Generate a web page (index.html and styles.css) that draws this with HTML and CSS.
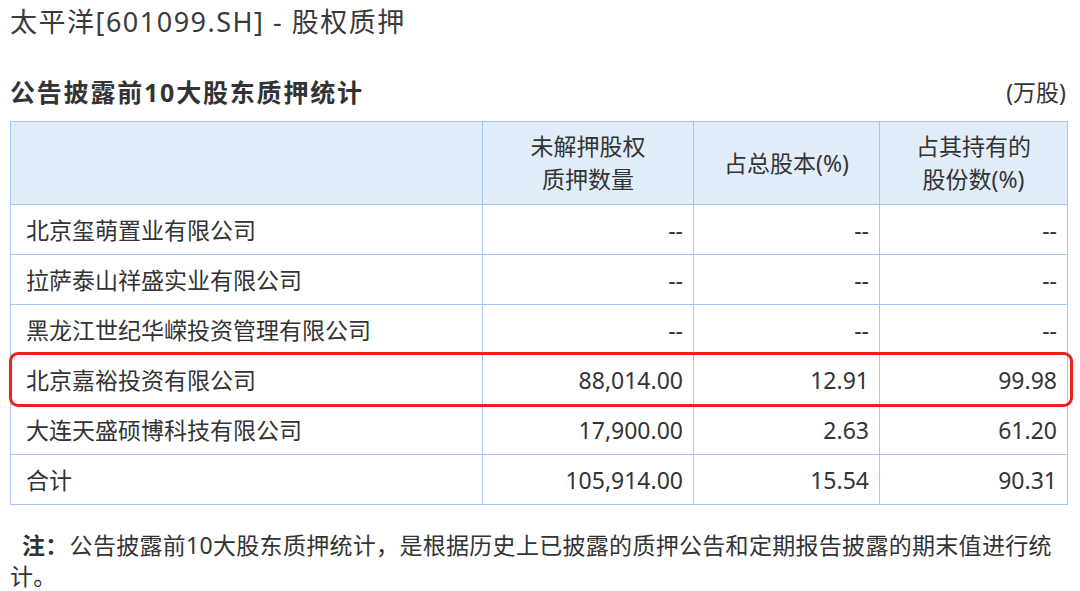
FILE: index.html
```html
<!DOCTYPE html>
<html lang="zh-CN">
<head>
<meta charset="utf-8">
<title>太平洋[601099.SH] - 股权质押</title>
<link rel="stylesheet" href="styles.css">
</head>
<body>
<div class="page">
  <h1 class="title">太平洋[601099.SH] - 股权质押</h1>
  <div class="subhead">
    <h2 class="subtitle">公告披露前10大股东质押统计</h2>
    <span class="unit">(万股)</span>
  </div>
  <div class="table-wrap">
    <table class="pledge">
      <colgroup>
        <col class="c-name">
        <col class="c-qty">
        <col class="c-pct1">
        <col class="c-pct2">
      </colgroup>
      <thead>
        <tr>
          <th></th>
          <th>未解押股权<br>质押数量</th>
          <th>占总股本(%)</th>
          <th>占其持有的<br>股份数(%)</th>
        </tr>
      </thead>
      <tbody>
        <tr><td class="name">北京玺萌置业有限公司</td><td>--</td><td>--</td><td>--</td></tr>
        <tr><td class="name">拉萨泰山祥盛实业有限公司</td><td>--</td><td>--</td><td>--</td></tr>
        <tr><td class="name">黑龙江世纪华嵘投资管理有限公司</td><td>--</td><td>--</td><td>--</td></tr>
        <tr><td class="name">北京嘉裕投资有限公司</td><td>88,014.00</td><td>12.91</td><td>99.98</td></tr>
        <tr><td class="name">大连天盛硕博科技有限公司</td><td>17,900.00</td><td>2.63</td><td>61.20</td></tr>
        <tr><td class="name">合计</td><td>105,914.00</td><td>15.54</td><td>90.31</td></tr>
      </tbody>
    </table>
    <div class="highlight"></div>
  </div>
  <p class="note"><b class="note-label">注：</b>公告披露前10大股东质押统计，是根据历史上已披露的质押公告和定期报告披露的期末值进行统计。</p>
</div>
</body>
</html>
```

FILE: styles.css
```css
html, body {
  margin: 0;
  padding: 0;
  background: #ffffff;
}

body {
  font-family: "Noto Sans", "Noto Sans CJK SC", sans-serif;
  color: #333333;
}

.page {
  padding: 4px 13px 0 10px;
}

.title {
  margin: 0;
  font-size: 27px;
  font-weight: normal;
  line-height: 35px;
  color: #3a3a3a;
  letter-spacing: 1.5px;
}

.subhead {
  display: flex;
  justify-content: space-between;
  align-items: center;
  margin-top: 37px;
  height: 32px;
}

.subtitle {
  margin: 0;
  font-size: 25px;
  font-weight: bold;
  line-height: 32px;
  letter-spacing: 1.8px;
  color: #333333;
}

.unit {
  font-size: 23px;
  line-height: 32px;
  color: #333333;
  margin-right: 1px;
}

.table-wrap {
  position: relative;
  margin-top: 13px;
}

.pledge {
  width: 1057px;
  border-collapse: collapse;
  table-layout: fixed;
  font-size: 23px;
  color: #333333;
}

.c-name { width: 472px; }
.c-qty { width: 211px; }
.c-pct1 { width: 186px; }
.c-pct2 { width: 188px; }

.pledge th,
.pledge td {
  border: 1px solid #aac5f3;
  padding: 0 10px 0 15px;
}

.pledge th {
  background: #e2edfa;
  font-weight: normal;
  text-align: center;
  height: 82px;
  line-height: 33px;
  padding: 0 6px;
}

.pledge td {
  height: 49px;
  line-height: 30px;
  text-align: right;
}

.pledge td.name {
  text-align: left;
}

.highlight {
  position: absolute;
  left: -1px;
  top: 231px;
  width: 1058px;
  height: 49px;
  border: 3px solid #e8231c;
  border-radius: 9px;
  pointer-events: none;
}

.note {
  margin: 25px 0 0 0;
  font-size: 23px;
  line-height: 31px;
  color: #333333;
  letter-spacing: 0.3px;
}

.note-label {
  display: inline-block;
  margin-left: 12px;
  margin-right: 1px;
  color: #333333;
}
```
